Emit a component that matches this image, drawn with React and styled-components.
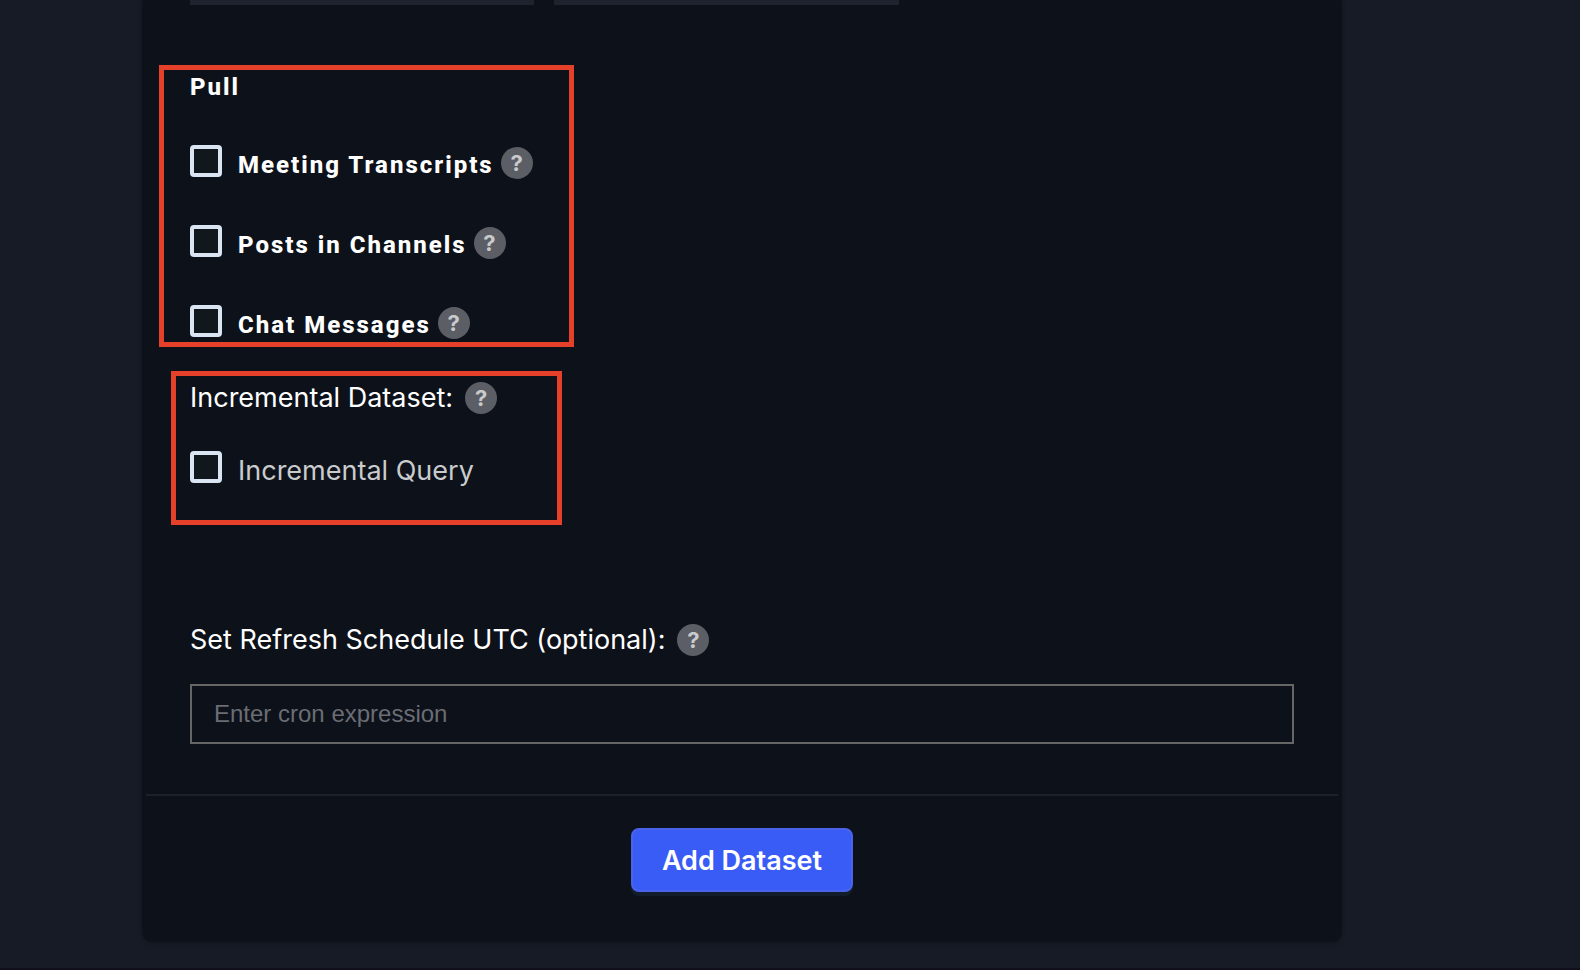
import styled, { createGlobalStyle } from "styled-components";

const GlobalStyle = createGlobalStyle`
    :root {
        --page-color: #171b26;
        --panel-color: #0d1119;
        --line-color: #1b2029;
        --mark-color: #e5402a;
        --check-color: #dae5f4;
        --main-color: #395cf6;
    }

    * {
        box-sizing: border-box;
    }

    body {
        margin: 0;
        background-color: var(--page-color);
        font-family: Inter, "Liberation Sans", sans-serif;
    }
`;

const Page = styled.main`
    min-height: 100vh;
    padding: 0 238px 26px 142px;
    border-bottom: 2px solid #100f1d;
`;

const Panel = styled.form`
    padding: 0 4px;
    border-radius: 0 0 10px 10px;
    background-color: var(--panel-color);
    box-shadow: 0 2px 4px rgba(13, 17, 25, 0.4);
`;

const PanelBody = styled.div`
    padding: 0 44px 50px;
`;

const FieldStrip = styled.div`
    display: flex;
    gap: 20px;
    margin-bottom: 60px;

    .field-end {
        flex: 0 0 31.2%;
        height: 5px;
        background-color: #1e232e;
    }
`;

const MarkedGroup = styled.fieldset`
    display: flex;
    flex-direction: column;
    width: ${(props) => props.$width}px;
    margin: 0 0 24px ${(props) => -props.$outset}px;
    padding: ${(props) => props.$padding};
    border: 5px solid var(--mark-color);
`;

const GroupTitle = styled.div`
    margin-bottom: 44px;
    color: white;
    font-family: Roboto, "Liberation Sans", sans-serif;
    font-size: 24px;
    font-weight: 800;
    line-height: 28px;
    letter-spacing: 2px;
`;

const CheckList = styled.div`
    display: flex;
    flex-direction: column;
    gap: 44px;
`;

const CheckRow = styled.div`
    display: flex;
    align-items: flex-start;

    .help {
        margin: 2px 0 0 7px;
    }
`;

const CheckBox = styled.input`
    appearance: none;
    flex: none;
    width: 32px;
    height: 32px;
    margin: 0 16px 0 0;
    border: 4px solid var(--check-color);
    border-radius: 4px;
    background-color: #10171d;

    &:checked {
        background-color: var(--main-color);
    }
`;

const CheckLabel = styled.label`
    padding-top: 4px;
    color: ${(props) => (props.$plain ? "#c9cbcd" : "white")};
    font-family: ${(props) => (props.$plain ? "Inter" : "Roboto")}, "Liberation Sans", sans-serif;
    font-size: ${(props) => (props.$plain ? 27 : 24)}px;
    font-weight: ${(props) => (props.$plain ? 400 : 800)};
    line-height: 32px;
    letter-spacing: ${(props) => (props.$plain ? "normal" : "2px")};
`;

const FieldHead = styled.div`
    display: flex;
    align-items: center;
    gap: 12px;
    margin-bottom: ${(props) => props.$gap}px;
    color: white;
    font-size: 27px;
    line-height: 32px;
`;

const HelpButton = styled.button`
    flex: none;
    width: 32px;
    height: 32px;
    padding: 0;
    border: none;
    border-radius: 50%;
    background-color: #5b5e64;
    color: #c8cacc;
    font-family: Inter, "Liberation Sans", sans-serif;
    font-size: 22px;
    font-weight: 700;
    line-height: 32px;
    text-align: center;
`;

const Schedule = styled.div`
    margin-top: 99px;
`;

const TextInput = styled.input`
    display: block;
    width: 100%;
    height: 60px;
    padding: 0 22px;
    border: 2px solid #666666;
    border-radius: 0;
    background-color: transparent;
    color: white;
    font-family: "Liberation Sans", sans-serif;
    font-size: 24px;

    &::placeholder {
        color: #6a6d74;
        opacity: 1;
    }
`;

const PanelFooter = styled.div`
    display: flex;
    justify-content: center;
    padding: 32px 0 50px;
    border-top: 2px solid var(--line-color);
`;

const SubmitButton = styled.button`
    height: 64px;
    padding: 2px 29px 0;
    border: 2px solid #4a63ea;
    border-radius: 8px;
    background-color: var(--main-color);
    box-shadow: 0 4px 0 #111d2a;
    color: white;
    font-family: Inter, "Liberation Sans", sans-serif;
    font-size: 27px;
    font-weight: 600;
    line-height: 32px;
`;

const pullOptions = [
    { id: "transcripts", label: "Meeting Transcripts" },
    { id: "posts", label: "Posts in Channels" },
    { id: "chats", label: "Chat Messages" },
];

const Help = () => (
    <HelpButton type='button' className='help'>?</HelpButton>
);

const App = () => {
    return (
        <>
            <GlobalStyle />
            <Page>
                <Panel onSubmit={(e) => e.preventDefault()}>
                    <PanelBody>
                        <FieldStrip>
                            <div className='field-end' />
                            <div className='field-end' />
                        </FieldStrip>

                        <MarkedGroup $width={415} $outset={31} $padding='3px 26px 1px'>
                            <GroupTitle>Pull</GroupTitle>
                            <CheckList>
                                {pullOptions.map((r) => (
                                    <CheckRow key={r.id}>
                                        <CheckBox type='checkbox' id={r.id} />
                                        <CheckLabel htmlFor={r.id}>{r.label}</CheckLabel>
                                        <Help />
                                    </CheckRow>
                                ))}
                            </CheckList>
                        </MarkedGroup>

                        <MarkedGroup $width={391} $outset={19} $padding='6px 14px 33px'>
                            <FieldHead $gap={37}>
                                <span>Incremental Dataset:</span>
                                <Help />
                            </FieldHead>
                            <CheckRow>
                                <CheckBox type='checkbox' id='incremental' />
                                <CheckLabel htmlFor='incremental' $plain>Incremental Query</CheckLabel>
                            </CheckRow>
                        </MarkedGroup>

                        <Schedule>
                            <FieldHead $gap={28}>
                                <label htmlFor='cron'>Set Refresh Schedule UTC (optional):</label>
                                <Help />
                            </FieldHead>
                            <TextInput type='text' id='cron' placeholder='Enter cron expression' />
                        </Schedule>
                    </PanelBody>
                    <PanelFooter>
                        <SubmitButton type='submit'>Add Dataset</SubmitButton>
                    </PanelFooter>
                </Panel>
            </Page>
        </>
    )
}

export default App;
